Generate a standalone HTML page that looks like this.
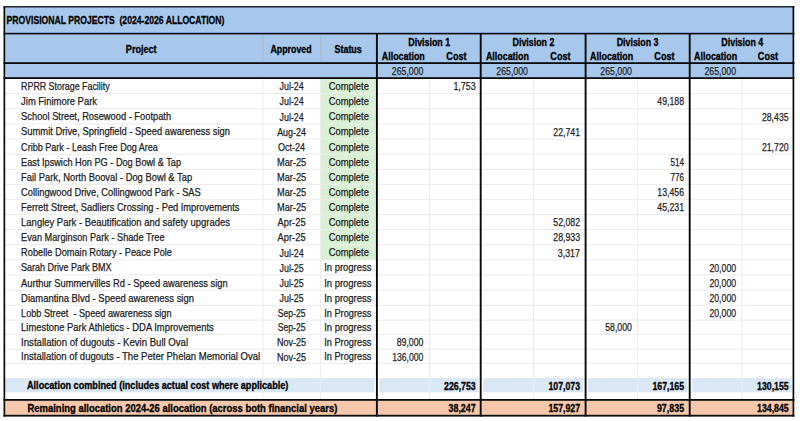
<!DOCTYPE html>
<html><head><meta charset="utf-8"><style>
html,body{margin:0;padding:0;background:#fff;width:800px;height:421px;overflow:hidden}
svg{display:block;font-family:"Liberation Sans", sans-serif}
</style></head><body>
<svg width="800" height="421" viewBox="0 0 800 421">
<rect width="800" height="421" fill="#fff"/>
<rect x="4.5" y="6.5" width="789.0" height="71.5" fill="#A7C8EC"/>
<rect x="5" y="93.1" width="788" height="1" fill="#ECECEC"/>
<rect x="5" y="108.2" width="788" height="1" fill="#ECECEC"/>
<rect x="5" y="123.4" width="788" height="1" fill="#ECECEC"/>
<rect x="5" y="138.5" width="788" height="1" fill="#ECECEC"/>
<rect x="5" y="153.7" width="788" height="1" fill="#ECECEC"/>
<rect x="5" y="168.8" width="788" height="1" fill="#ECECEC"/>
<rect x="5" y="183.9" width="788" height="1" fill="#ECECEC"/>
<rect x="5" y="198.8" width="788" height="1" fill="#ECECEC"/>
<rect x="5" y="214.1" width="788" height="1" fill="#ECECEC"/>
<rect x="5" y="229.1" width="788" height="1" fill="#ECECEC"/>
<rect x="5" y="244.2" width="788" height="1" fill="#ECECEC"/>
<rect x="5" y="259.3" width="788" height="1" fill="#ECECEC"/>
<rect x="5" y="274.4" width="788" height="1" fill="#ECECEC"/>
<rect x="5" y="289.7" width="788" height="1" fill="#ECECEC"/>
<rect x="5" y="304.8" width="788" height="1" fill="#ECECEC"/>
<rect x="5" y="319.6" width="788" height="1" fill="#ECECEC"/>
<rect x="5" y="333.9" width="788" height="1" fill="#ECECEC"/>
<rect x="5" y="348.7" width="788" height="1" fill="#ECECEC"/>
<rect x="5" y="362.85" width="788" height="1" fill="#ECECEC"/>
<rect x="5" y="378.1" width="788" height="1" fill="#ECECEC"/>
<rect x="262.4" y="78" width="1" height="321" fill="#ECECEC"/>
<rect x="319.9" y="78" width="1" height="321" fill="#ECECEC"/>
<rect x="429.1" y="78" width="1" height="321" fill="#ECECEC"/>
<rect x="533.0" y="78" width="1" height="321" fill="#ECECEC"/>
<rect x="636.9" y="78" width="1" height="321" fill="#ECECEC"/>
<rect x="741.5" y="78" width="1" height="321" fill="#ECECEC"/>
<rect x="320.9" y="78" width="55.1" height="181.8" fill="#DAF0D4"/>
<rect x="321" y="93.1" width="55" height="1" fill="#E9F0E7"/>
<rect x="321" y="108.2" width="55" height="1" fill="#E9F0E7"/>
<rect x="321" y="123.4" width="55" height="1" fill="#E9F0E7"/>
<rect x="321" y="138.5" width="55" height="1" fill="#E9F0E7"/>
<rect x="321" y="153.7" width="55" height="1" fill="#E9F0E7"/>
<rect x="321" y="168.8" width="55" height="1" fill="#E9F0E7"/>
<rect x="321" y="183.9" width="55" height="1" fill="#E9F0E7"/>
<rect x="321" y="198.8" width="55" height="1" fill="#E9F0E7"/>
<rect x="321" y="214.1" width="55" height="1" fill="#E9F0E7"/>
<rect x="321" y="229.1" width="55" height="1" fill="#E9F0E7"/>
<rect x="321" y="244.2" width="55" height="1" fill="#E9F0E7"/>
<rect x="262.4" y="34" width="1" height="29" fill="#A9BACB"/>
<rect x="319.9" y="34" width="1" height="29" fill="#A9BACB"/>
<rect x="5" y="378.3" width="788" height="14.0" fill="#DAE8F6"/>
<rect x="262.4" y="378.3" width="1" height="14" fill="#E6EFF9"/>
<rect x="319.9" y="378.3" width="1" height="14" fill="#E6EFF9"/>
<rect x="429.1" y="378.3" width="1" height="14" fill="#E6EFF9"/>
<rect x="533.0" y="378.3" width="1" height="14" fill="#E6EFF9"/>
<rect x="636.9" y="378.3" width="1" height="14" fill="#E6EFF9"/>
<rect x="741.5" y="378.3" width="1" height="14" fill="#E6EFF9"/>
<rect x="374.5" y="378.3" width="4.8" height="14" fill="#fff"/>
<rect x="478.3" y="378.3" width="4.8" height="14" fill="#fff"/>
<rect x="583.2" y="378.3" width="4.8" height="14" fill="#fff"/>
<rect x="687.3000000000001" y="378.3" width="4.8" height="14" fill="#fff"/>
<rect x="791" y="378.3" width="2" height="14" fill="#fff"/>
<rect x="5" y="400.6" width="788" height="14.4" fill="#F6C7AA"/>
<rect x="3.5" y="6.1499999999999995" width="790.9" height="1.3" fill="#0A0A0A"/>
<rect x="3.5" y="32.800000000000004" width="790.9" height="1.6" fill="#0A0A0A"/>
<rect x="3.5" y="62.2" width="790.9" height="1.8" fill="#0A0A0A"/>
<rect x="3.5" y="77.19999999999999" width="790.9" height="1.8" fill="#0A0A0A"/>
<rect x="3.5" y="399.0" width="790.9" height="1.8" fill="#0A0A0A"/>
<rect x="3.5" y="414.8" width="790.9" height="1.8" fill="#0A0A0A"/>
<rect x="3.4999999999999996" y="6.2" width="1.7" height="410.4" fill="#0A0A0A"/>
<rect x="792.55" y="6.2" width="1.7" height="410.4" fill="#0A0A0A"/>
<rect x="375.95" y="33.5" width="1.9" height="383.1" fill="#0A0A0A"/>
<rect x="479.75" y="33.5" width="1.9" height="383.1" fill="#0A0A0A"/>
<rect x="584.65" y="33.5" width="1.9" height="383.1" fill="#0A0A0A"/>
<rect x="688.75" y="33.5" width="1.9" height="383.1" fill="#0A0A0A"/>
<text x="6.6" y="24.1" font-size="11.2" fill="#000" font-weight="bold" stroke="#000" stroke-width="0.3" textLength="217.8" lengthAdjust="spacingAndGlyphs" xml:space="preserve">PROVISIONAL PROJECTS  (2024-2026 ALLOCATION)</text>
<text x="141.2" y="52.6" font-size="10" fill="#000" text-anchor="middle" font-weight="bold" stroke="#000" stroke-width="0.3" textLength="30.7" lengthAdjust="spacingAndGlyphs" xml:space="preserve">Project</text>
<text x="291.05" y="52.6" font-size="10" fill="#000" text-anchor="middle" font-weight="bold" stroke="#000" stroke-width="0.3" textLength="41.3" lengthAdjust="spacingAndGlyphs" xml:space="preserve">Approved</text>
<text x="348.15" y="52.6" font-size="10" fill="#000" text-anchor="middle" font-weight="bold" stroke="#000" stroke-width="0.3" textLength="27.3" lengthAdjust="spacingAndGlyphs" xml:space="preserve">Status</text>
<text x="429.25" y="45.6" font-size="10" fill="#000" text-anchor="middle" font-weight="bold" stroke="#000" stroke-width="0.3" textLength="41.9" lengthAdjust="spacingAndGlyphs" xml:space="preserve">Division 1</text>
<text x="403.3" y="59.7" font-size="10" fill="#000" text-anchor="middle" font-weight="bold" stroke="#000" stroke-width="0.3" textLength="43.0" lengthAdjust="spacingAndGlyphs" xml:space="preserve">Allocation</text>
<text x="456.5" y="59.7" font-size="10" fill="#000" text-anchor="middle" font-weight="bold" stroke="#000" stroke-width="0.3" textLength="20.3" lengthAdjust="spacingAndGlyphs" xml:space="preserve">Cost</text>
<text x="423.4" y="75.0" font-size="10.8" fill="#1E1E1E" text-anchor="end" stroke="#1E1E1E" stroke-width="0.25" textLength="31.6" lengthAdjust="spacingAndGlyphs" xml:space="preserve">265,000</text>
<text x="533.5" y="45.6" font-size="10" fill="#000" text-anchor="middle" font-weight="bold" stroke="#000" stroke-width="0.3" textLength="41.9" lengthAdjust="spacingAndGlyphs" xml:space="preserve">Division 2</text>
<text x="507.4" y="59.7" font-size="10" fill="#000" text-anchor="middle" font-weight="bold" stroke="#000" stroke-width="0.3" textLength="43.0" lengthAdjust="spacingAndGlyphs" xml:space="preserve">Allocation</text>
<text x="560.5" y="59.7" font-size="10" fill="#000" text-anchor="middle" font-weight="bold" stroke="#000" stroke-width="0.3" textLength="20.3" lengthAdjust="spacingAndGlyphs" xml:space="preserve">Cost</text>
<text x="527.9" y="75.0" font-size="10.8" fill="#1E1E1E" text-anchor="end" stroke="#1E1E1E" stroke-width="0.25" textLength="31.6" lengthAdjust="spacingAndGlyphs" xml:space="preserve">265,000</text>
<text x="637.6" y="45.6" font-size="10" fill="#000" text-anchor="middle" font-weight="bold" stroke="#000" stroke-width="0.3" textLength="41.9" lengthAdjust="spacingAndGlyphs" xml:space="preserve">Division 3</text>
<text x="611.6" y="59.7" font-size="10" fill="#000" text-anchor="middle" font-weight="bold" stroke="#000" stroke-width="0.3" textLength="43.0" lengthAdjust="spacingAndGlyphs" xml:space="preserve">Allocation</text>
<text x="664.5" y="59.7" font-size="10" fill="#000" text-anchor="middle" font-weight="bold" stroke="#000" stroke-width="0.3" textLength="20.3" lengthAdjust="spacingAndGlyphs" xml:space="preserve">Cost</text>
<text x="631.9" y="75.0" font-size="10.8" fill="#1E1E1E" text-anchor="end" stroke="#1E1E1E" stroke-width="0.25" textLength="31.6" lengthAdjust="spacingAndGlyphs" xml:space="preserve">265,000</text>
<text x="742.3" y="45.6" font-size="10" fill="#000" text-anchor="middle" font-weight="bold" stroke="#000" stroke-width="0.3" textLength="41.9" lengthAdjust="spacingAndGlyphs" xml:space="preserve">Division 4</text>
<text x="715.6" y="59.7" font-size="10" fill="#000" text-anchor="middle" font-weight="bold" stroke="#000" stroke-width="0.3" textLength="43.0" lengthAdjust="spacingAndGlyphs" xml:space="preserve">Allocation</text>
<text x="768.0" y="59.7" font-size="10" fill="#000" text-anchor="middle" font-weight="bold" stroke="#000" stroke-width="0.3" textLength="20.3" lengthAdjust="spacingAndGlyphs" xml:space="preserve">Cost</text>
<text x="736.1" y="75.0" font-size="10.8" fill="#1E1E1E" text-anchor="end" stroke="#1E1E1E" stroke-width="0.25" textLength="31.6" lengthAdjust="spacingAndGlyphs" xml:space="preserve">265,000</text>
<text x="21.1" y="90.0" font-size="10.1" fill="#1E1E1E" stroke="#1E1E1E" stroke-width="0.25" textLength="88.5" lengthAdjust="spacingAndGlyphs" xml:space="preserve">RPRR Storage Facility</text>
<text x="291.6" y="90.3" font-size="10.8" fill="#1E1E1E" text-anchor="middle" stroke="#1E1E1E" stroke-width="0.25" textLength="24.2" lengthAdjust="spacingAndGlyphs" xml:space="preserve">Jul-24</text>
<text x="348.8" y="90.0" font-size="10.1" fill="#1E1E1E" text-anchor="middle" stroke="#1E1E1E" stroke-width="0.25" textLength="40.2" lengthAdjust="spacingAndGlyphs" xml:space="preserve">Complete</text>
<text x="475.6" y="90.3" font-size="10.8" fill="#1E1E1E" text-anchor="end" stroke="#1E1E1E" stroke-width="0.25" textLength="22.2" lengthAdjust="spacingAndGlyphs" xml:space="preserve">1,753</text>
<text x="21.1" y="105.1" font-size="10.1" fill="#1E1E1E" stroke="#1E1E1E" stroke-width="0.25" textLength="75.9" lengthAdjust="spacingAndGlyphs" xml:space="preserve">Jim Finimore Park</text>
<text x="291.6" y="105.39999999999999" font-size="10.8" fill="#1E1E1E" text-anchor="middle" stroke="#1E1E1E" stroke-width="0.25" textLength="24.2" lengthAdjust="spacingAndGlyphs" xml:space="preserve">Jul-24</text>
<text x="348.8" y="105.1" font-size="10.1" fill="#1E1E1E" text-anchor="middle" stroke="#1E1E1E" stroke-width="0.25" textLength="40.2" lengthAdjust="spacingAndGlyphs" xml:space="preserve">Complete</text>
<text x="684.0" y="105.39999999999999" font-size="10.8" fill="#1E1E1E" text-anchor="end" stroke="#1E1E1E" stroke-width="0.25" textLength="26.7" lengthAdjust="spacingAndGlyphs" xml:space="preserve">49,188</text>
<text x="21.1" y="120.3" font-size="10.1" fill="#1E1E1E" stroke="#1E1E1E" stroke-width="0.25" textLength="150.0" lengthAdjust="spacingAndGlyphs" xml:space="preserve">School Street, Rosewood - Footpath</text>
<text x="291.6" y="120.6" font-size="10.8" fill="#1E1E1E" text-anchor="middle" stroke="#1E1E1E" stroke-width="0.25" textLength="24.2" lengthAdjust="spacingAndGlyphs" xml:space="preserve">Jul-24</text>
<text x="348.8" y="120.3" font-size="10.1" fill="#1E1E1E" text-anchor="middle" stroke="#1E1E1E" stroke-width="0.25" textLength="40.2" lengthAdjust="spacingAndGlyphs" xml:space="preserve">Complete</text>
<text x="788.6" y="120.6" font-size="10.8" fill="#1E1E1E" text-anchor="end" stroke="#1E1E1E" stroke-width="0.25" textLength="26.7" lengthAdjust="spacingAndGlyphs" xml:space="preserve">28,435</text>
<text x="21.1" y="135.4" font-size="10.1" fill="#1E1E1E" stroke="#1E1E1E" stroke-width="0.25" textLength="208.8" lengthAdjust="spacingAndGlyphs" xml:space="preserve">Summit Drive, Springfield - Speed awareness sign</text>
<text x="291.6" y="135.70000000000002" font-size="10.8" fill="#1E1E1E" text-anchor="middle" stroke="#1E1E1E" stroke-width="0.25" textLength="28.9" lengthAdjust="spacingAndGlyphs" xml:space="preserve">Aug-24</text>
<text x="348.8" y="135.4" font-size="10.1" fill="#1E1E1E" text-anchor="middle" stroke="#1E1E1E" stroke-width="0.25" textLength="40.2" lengthAdjust="spacingAndGlyphs" xml:space="preserve">Complete</text>
<text x="580.0" y="135.70000000000002" font-size="10.8" fill="#1E1E1E" text-anchor="end" stroke="#1E1E1E" stroke-width="0.25" textLength="26.7" lengthAdjust="spacingAndGlyphs" xml:space="preserve">22,741</text>
<text x="21.1" y="150.6" font-size="10.1" fill="#1E1E1E" stroke="#1E1E1E" stroke-width="0.25" textLength="136.8" lengthAdjust="spacingAndGlyphs" xml:space="preserve">Cribb Park - Leash Free Dog Area</text>
<text x="291.6" y="150.9" font-size="10.8" fill="#1E1E1E" text-anchor="middle" stroke="#1E1E1E" stroke-width="0.25" textLength="27.1" lengthAdjust="spacingAndGlyphs" xml:space="preserve">Oct-24</text>
<text x="348.8" y="150.6" font-size="10.1" fill="#1E1E1E" text-anchor="middle" stroke="#1E1E1E" stroke-width="0.25" textLength="40.2" lengthAdjust="spacingAndGlyphs" xml:space="preserve">Complete</text>
<text x="788.6" y="150.9" font-size="10.8" fill="#1E1E1E" text-anchor="end" stroke="#1E1E1E" stroke-width="0.25" textLength="26.7" lengthAdjust="spacingAndGlyphs" xml:space="preserve">21,720</text>
<text x="21.1" y="165.7" font-size="10.1" fill="#1E1E1E" stroke="#1E1E1E" stroke-width="0.25" textLength="159.9" lengthAdjust="spacingAndGlyphs" xml:space="preserve">East Ipswich Hon PG - Dog Bowl &amp; Tap</text>
<text x="291.6" y="166.0" font-size="10.8" fill="#1E1E1E" text-anchor="middle" stroke="#1E1E1E" stroke-width="0.25" textLength="29.3" lengthAdjust="spacingAndGlyphs" xml:space="preserve">Mar-25</text>
<text x="348.8" y="165.7" font-size="10.1" fill="#1E1E1E" text-anchor="middle" stroke="#1E1E1E" stroke-width="0.25" textLength="40.2" lengthAdjust="spacingAndGlyphs" xml:space="preserve">Complete</text>
<text x="684.0" y="166.0" font-size="10.8" fill="#1E1E1E" text-anchor="end" stroke="#1E1E1E" stroke-width="0.25" textLength="13.5" lengthAdjust="spacingAndGlyphs" xml:space="preserve">514</text>
<text x="21.1" y="180.8" font-size="10.1" fill="#1E1E1E" stroke="#1E1E1E" stroke-width="0.25" textLength="171.0" lengthAdjust="spacingAndGlyphs" xml:space="preserve">Fail Park, North Booval - Dog Bowl &amp; Tap</text>
<text x="291.6" y="181.10000000000002" font-size="10.8" fill="#1E1E1E" text-anchor="middle" stroke="#1E1E1E" stroke-width="0.25" textLength="29.3" lengthAdjust="spacingAndGlyphs" xml:space="preserve">Mar-25</text>
<text x="348.8" y="180.8" font-size="10.1" fill="#1E1E1E" text-anchor="middle" stroke="#1E1E1E" stroke-width="0.25" textLength="40.2" lengthAdjust="spacingAndGlyphs" xml:space="preserve">Complete</text>
<text x="684.0" y="181.10000000000002" font-size="10.8" fill="#1E1E1E" text-anchor="end" stroke="#1E1E1E" stroke-width="0.25" textLength="13.5" lengthAdjust="spacingAndGlyphs" xml:space="preserve">776</text>
<text x="21.1" y="195.7" font-size="10.1" fill="#1E1E1E" stroke="#1E1E1E" stroke-width="0.25" textLength="179.7" lengthAdjust="spacingAndGlyphs" xml:space="preserve">Collingwood Drive, Collingwood Park - SAS</text>
<text x="291.6" y="196.0" font-size="10.8" fill="#1E1E1E" text-anchor="middle" stroke="#1E1E1E" stroke-width="0.25" textLength="29.3" lengthAdjust="spacingAndGlyphs" xml:space="preserve">Mar-25</text>
<text x="348.8" y="195.7" font-size="10.1" fill="#1E1E1E" text-anchor="middle" stroke="#1E1E1E" stroke-width="0.25" textLength="40.2" lengthAdjust="spacingAndGlyphs" xml:space="preserve">Complete</text>
<text x="684.0" y="196.0" font-size="10.8" fill="#1E1E1E" text-anchor="end" stroke="#1E1E1E" stroke-width="0.25" textLength="26.7" lengthAdjust="spacingAndGlyphs" xml:space="preserve">13,456</text>
<text x="21.1" y="211.0" font-size="10.1" fill="#1E1E1E" stroke="#1E1E1E" stroke-width="0.25" textLength="218.4" lengthAdjust="spacingAndGlyphs" xml:space="preserve">Ferrett Street, Sadliers Crossing - Ped Improvements</text>
<text x="291.6" y="211.3" font-size="10.8" fill="#1E1E1E" text-anchor="middle" stroke="#1E1E1E" stroke-width="0.25" textLength="29.3" lengthAdjust="spacingAndGlyphs" xml:space="preserve">Mar-25</text>
<text x="348.8" y="211.0" font-size="10.1" fill="#1E1E1E" text-anchor="middle" stroke="#1E1E1E" stroke-width="0.25" textLength="40.2" lengthAdjust="spacingAndGlyphs" xml:space="preserve">Complete</text>
<text x="684.0" y="211.3" font-size="10.8" fill="#1E1E1E" text-anchor="end" stroke="#1E1E1E" stroke-width="0.25" textLength="26.7" lengthAdjust="spacingAndGlyphs" xml:space="preserve">45,231</text>
<text x="21.1" y="226.0" font-size="10.1" fill="#1E1E1E" stroke="#1E1E1E" stroke-width="0.25" textLength="208.8" lengthAdjust="spacingAndGlyphs" xml:space="preserve">Langley Park - Beautification and safety upgrades</text>
<text x="291.6" y="226.3" font-size="10.8" fill="#1E1E1E" text-anchor="middle" stroke="#1E1E1E" stroke-width="0.25" textLength="28.0" lengthAdjust="spacingAndGlyphs" xml:space="preserve">Apr-25</text>
<text x="348.8" y="226.0" font-size="10.1" fill="#1E1E1E" text-anchor="middle" stroke="#1E1E1E" stroke-width="0.25" textLength="40.2" lengthAdjust="spacingAndGlyphs" xml:space="preserve">Complete</text>
<text x="580.0" y="226.3" font-size="10.8" fill="#1E1E1E" text-anchor="end" stroke="#1E1E1E" stroke-width="0.25" textLength="26.7" lengthAdjust="spacingAndGlyphs" xml:space="preserve">52,082</text>
<text x="21.1" y="241.1" font-size="10.1" fill="#1E1E1E" stroke="#1E1E1E" stroke-width="0.25" textLength="143.4" lengthAdjust="spacingAndGlyphs" xml:space="preserve">Evan Marginson Park - Shade Tree</text>
<text x="291.6" y="241.4" font-size="10.8" fill="#1E1E1E" text-anchor="middle" stroke="#1E1E1E" stroke-width="0.25" textLength="28.0" lengthAdjust="spacingAndGlyphs" xml:space="preserve">Apr-25</text>
<text x="348.8" y="241.1" font-size="10.1" fill="#1E1E1E" text-anchor="middle" stroke="#1E1E1E" stroke-width="0.25" textLength="40.2" lengthAdjust="spacingAndGlyphs" xml:space="preserve">Complete</text>
<text x="580.0" y="241.4" font-size="10.8" fill="#1E1E1E" text-anchor="end" stroke="#1E1E1E" stroke-width="0.25" textLength="26.7" lengthAdjust="spacingAndGlyphs" xml:space="preserve">28,933</text>
<text x="21.1" y="256.2" font-size="10.1" fill="#1E1E1E" stroke="#1E1E1E" stroke-width="0.25" textLength="150.9" lengthAdjust="spacingAndGlyphs" xml:space="preserve">Robelle Domain Rotary - Peace Pole</text>
<text x="291.6" y="256.5" font-size="10.8" fill="#1E1E1E" text-anchor="middle" stroke="#1E1E1E" stroke-width="0.25" textLength="24.2" lengthAdjust="spacingAndGlyphs" xml:space="preserve">Jul-24</text>
<text x="348.8" y="256.2" font-size="10.1" fill="#1E1E1E" text-anchor="middle" stroke="#1E1E1E" stroke-width="0.25" textLength="40.2" lengthAdjust="spacingAndGlyphs" xml:space="preserve">Complete</text>
<text x="580.0" y="256.5" font-size="10.8" fill="#1E1E1E" text-anchor="end" stroke="#1E1E1E" stroke-width="0.25" textLength="22.2" lengthAdjust="spacingAndGlyphs" xml:space="preserve">3,317</text>
<text x="21.1" y="271.3" font-size="10.1" fill="#1E1E1E" stroke="#1E1E1E" stroke-width="0.25" textLength="90.3" lengthAdjust="spacingAndGlyphs" xml:space="preserve">Sarah Drive Park BMX</text>
<text x="291.6" y="271.6" font-size="10.8" fill="#1E1E1E" text-anchor="middle" stroke="#1E1E1E" stroke-width="0.25" textLength="24.2" lengthAdjust="spacingAndGlyphs" xml:space="preserve">Jul-25</text>
<text x="347.8" y="271.3" font-size="10.1" fill="#1E1E1E" text-anchor="middle" stroke="#1E1E1E" stroke-width="0.25" textLength="47.3" lengthAdjust="spacingAndGlyphs" xml:space="preserve">In progress</text>
<text x="736.1" y="271.6" font-size="10.8" fill="#1E1E1E" text-anchor="end" stroke="#1E1E1E" stroke-width="0.25" textLength="26.7" lengthAdjust="spacingAndGlyphs" xml:space="preserve">20,000</text>
<text x="21.1" y="286.6" font-size="10.1" fill="#1E1E1E" stroke="#1E1E1E" stroke-width="0.25" textLength="206.6" lengthAdjust="spacingAndGlyphs" xml:space="preserve">Aurthur Summervilles Rd - Speed awareness sign</text>
<text x="291.6" y="286.90000000000003" font-size="10.8" fill="#1E1E1E" text-anchor="middle" stroke="#1E1E1E" stroke-width="0.25" textLength="24.2" lengthAdjust="spacingAndGlyphs" xml:space="preserve">Jul-25</text>
<text x="347.8" y="286.6" font-size="10.1" fill="#1E1E1E" text-anchor="middle" stroke="#1E1E1E" stroke-width="0.25" textLength="47.3" lengthAdjust="spacingAndGlyphs" xml:space="preserve">In progress</text>
<text x="736.1" y="286.90000000000003" font-size="10.8" fill="#1E1E1E" text-anchor="end" stroke="#1E1E1E" stroke-width="0.25" textLength="26.7" lengthAdjust="spacingAndGlyphs" xml:space="preserve">20,000</text>
<text x="21.1" y="301.7" font-size="10.1" fill="#1E1E1E" stroke="#1E1E1E" stroke-width="0.25" textLength="172.9" lengthAdjust="spacingAndGlyphs" xml:space="preserve">Diamantina Blvd - Speed awareness sign</text>
<text x="291.6" y="302.0" font-size="10.8" fill="#1E1E1E" text-anchor="middle" stroke="#1E1E1E" stroke-width="0.25" textLength="24.2" lengthAdjust="spacingAndGlyphs" xml:space="preserve">Jul-25</text>
<text x="347.8" y="301.7" font-size="10.1" fill="#1E1E1E" text-anchor="middle" stroke="#1E1E1E" stroke-width="0.25" textLength="47.3" lengthAdjust="spacingAndGlyphs" xml:space="preserve">In progress</text>
<text x="736.1" y="302.0" font-size="10.8" fill="#1E1E1E" text-anchor="end" stroke="#1E1E1E" stroke-width="0.25" textLength="26.7" lengthAdjust="spacingAndGlyphs" xml:space="preserve">20,000</text>
<text x="21.1" y="316.5" font-size="10.1" fill="#1E1E1E" stroke="#1E1E1E" stroke-width="0.25" textLength="150.4" lengthAdjust="spacingAndGlyphs" xml:space="preserve">Lobb Street  - Speed awareness sign</text>
<text x="291.6" y="316.8" font-size="10.8" fill="#1E1E1E" text-anchor="middle" stroke="#1E1E1E" stroke-width="0.25" textLength="27.9" lengthAdjust="spacingAndGlyphs" xml:space="preserve">Sep-25</text>
<text x="347.8" y="316.5" font-size="10.1" fill="#1E1E1E" text-anchor="middle" stroke="#1E1E1E" stroke-width="0.25" textLength="47.3" lengthAdjust="spacingAndGlyphs" xml:space="preserve">In Progress</text>
<text x="736.1" y="316.8" font-size="10.8" fill="#1E1E1E" text-anchor="end" stroke="#1E1E1E" stroke-width="0.25" textLength="26.7" lengthAdjust="spacingAndGlyphs" xml:space="preserve">20,000</text>
<text x="21.1" y="330.8" font-size="10.1" fill="#1E1E1E" stroke="#1E1E1E" stroke-width="0.25" textLength="192.7" lengthAdjust="spacingAndGlyphs" xml:space="preserve">Limestone Park Athletics - DDA Improvements</text>
<text x="291.6" y="331.1" font-size="10.8" fill="#1E1E1E" text-anchor="middle" stroke="#1E1E1E" stroke-width="0.25" textLength="27.9" lengthAdjust="spacingAndGlyphs" xml:space="preserve">Sep-25</text>
<text x="347.8" y="330.8" font-size="10.1" fill="#1E1E1E" text-anchor="middle" stroke="#1E1E1E" stroke-width="0.25" textLength="47.3" lengthAdjust="spacingAndGlyphs" xml:space="preserve">In progress</text>
<text x="631.9" y="331.1" font-size="10.8" fill="#1E1E1E" text-anchor="end" stroke="#1E1E1E" stroke-width="0.25" textLength="26.7" lengthAdjust="spacingAndGlyphs" xml:space="preserve">58,000</text>
<text x="21.1" y="345.6" font-size="10.1" fill="#1E1E1E" stroke="#1E1E1E" stroke-width="0.25" textLength="167.0" lengthAdjust="spacingAndGlyphs" xml:space="preserve">Installation of dugouts - Kevin Bull Oval</text>
<text x="291.6" y="345.90000000000003" font-size="10.8" fill="#1E1E1E" text-anchor="middle" stroke="#1E1E1E" stroke-width="0.25" textLength="29.1" lengthAdjust="spacingAndGlyphs" xml:space="preserve">Nov-25</text>
<text x="347.8" y="345.6" font-size="10.1" fill="#1E1E1E" text-anchor="middle" stroke="#1E1E1E" stroke-width="0.25" textLength="47.3" lengthAdjust="spacingAndGlyphs" xml:space="preserve">In Progress</text>
<text x="423.4" y="345.90000000000003" font-size="10.8" fill="#1E1E1E" text-anchor="end" stroke="#1E1E1E" stroke-width="0.25" textLength="26.7" lengthAdjust="spacingAndGlyphs" xml:space="preserve">89,000</text>
<text x="21.1" y="360.25" font-size="10.1" fill="#1E1E1E" stroke="#1E1E1E" stroke-width="0.25" textLength="239.1" lengthAdjust="spacingAndGlyphs" xml:space="preserve">Installation of dugouts - The Peter Phelan Memorial Oval</text>
<text x="291.6" y="360.55" font-size="10.8" fill="#1E1E1E" text-anchor="middle" stroke="#1E1E1E" stroke-width="0.25" textLength="29.1" lengthAdjust="spacingAndGlyphs" xml:space="preserve">Nov-25</text>
<text x="347.8" y="360.25" font-size="10.1" fill="#1E1E1E" text-anchor="middle" stroke="#1E1E1E" stroke-width="0.25" textLength="47.3" lengthAdjust="spacingAndGlyphs" xml:space="preserve">In Progress</text>
<text x="423.4" y="360.55" font-size="10.8" fill="#1E1E1E" text-anchor="end" stroke="#1E1E1E" stroke-width="0.25" textLength="31.2" lengthAdjust="spacingAndGlyphs" xml:space="preserve">136,000</text>
<text x="27.0" y="389.0" font-size="10.5" fill="#000" font-weight="bold" stroke="#000" stroke-width="0.3" textLength="261.4" lengthAdjust="spacingAndGlyphs" xml:space="preserve">Allocation combined (includes actual cost where applicable)</text>
<text x="27.5" y="411.8" font-size="10.5" fill="#000" font-weight="bold" stroke="#000" stroke-width="0.3" textLength="309.8" lengthAdjust="spacingAndGlyphs" xml:space="preserve">Remaining allocation 2024-26 allocation (across both financial years)</text>
<text x="475.70000000000005" y="389.5" font-size="10.8" fill="#000" text-anchor="end" font-weight="bold" stroke="#000" stroke-width="0.3" textLength="31.7" lengthAdjust="spacingAndGlyphs" xml:space="preserve">226,753</text>
<text x="475.70000000000005" y="411.9" font-size="10.8" fill="#000" text-anchor="end" font-weight="bold" stroke="#000" stroke-width="0.3" textLength="27.2" lengthAdjust="spacingAndGlyphs" xml:space="preserve">38,247</text>
<text x="580.1" y="389.5" font-size="10.8" fill="#000" text-anchor="end" font-weight="bold" stroke="#000" stroke-width="0.3" textLength="31.7" lengthAdjust="spacingAndGlyphs" xml:space="preserve">107,073</text>
<text x="580.1" y="411.9" font-size="10.8" fill="#000" text-anchor="end" font-weight="bold" stroke="#000" stroke-width="0.3" textLength="31.7" lengthAdjust="spacingAndGlyphs" xml:space="preserve">157,927</text>
<text x="684.1" y="389.5" font-size="10.8" fill="#000" text-anchor="end" font-weight="bold" stroke="#000" stroke-width="0.3" textLength="31.7" lengthAdjust="spacingAndGlyphs" xml:space="preserve">167,165</text>
<text x="684.1" y="411.9" font-size="10.8" fill="#000" text-anchor="end" font-weight="bold" stroke="#000" stroke-width="0.3" textLength="27.2" lengthAdjust="spacingAndGlyphs" xml:space="preserve">97,835</text>
<text x="788.7" y="389.5" font-size="10.8" fill="#000" text-anchor="end" font-weight="bold" stroke="#000" stroke-width="0.3" textLength="31.7" lengthAdjust="spacingAndGlyphs" xml:space="preserve">130,155</text>
<text x="788.7" y="411.9" font-size="10.8" fill="#000" text-anchor="end" font-weight="bold" stroke="#000" stroke-width="0.3" textLength="31.7" lengthAdjust="spacingAndGlyphs" xml:space="preserve">134,845</text>
</svg>
</body></html>
